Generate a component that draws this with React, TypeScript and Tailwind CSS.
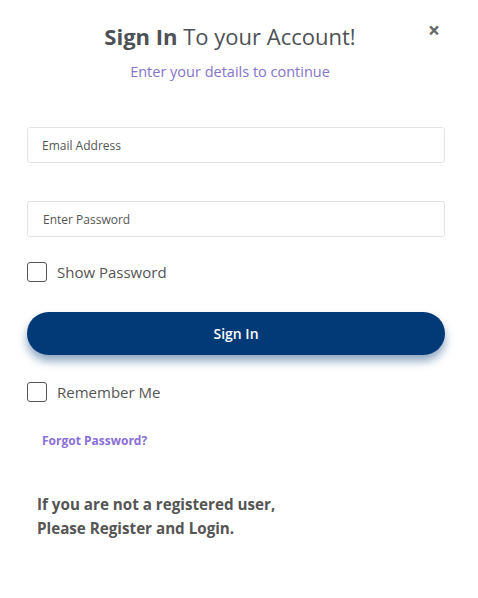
import { useState } from "react";

export default function App() {
  const [showPassword, setShowPassword] = useState(false);
  const [remember, setRemember] = useState(false);

  return (
    <div className="min-h-[598px] w-full bg-white font-['Open_Sans',sans-serif] text-[#555]">
      <div className="relative pl-[27px] pr-[33px] pt-[20px]">
        {/* Close */}
        <button className="absolute right-[38px] top-[20px] text-[21px] font-bold leading-none text-[#666]">
          ×
        </button>

        {/* Header */}
        <div className="mr-[12px] text-center">
          <h2 className="text-[22px] leading-[32px] text-[#4d5156]">
            <span className="font-bold">Sign In</span> To your Account!
          </h2>
          <p className="mt-[10px] text-[14.5px] leading-[20px] text-[#8574c9]">
            Enter your details to continue
          </p>
        </div>

        {/* Form */}
        <div className="mt-[45px] flex flex-col">
          <input
            type="email"
            placeholder="Email Address"
            className="h-[36px] w-full rounded-[3px] border border-[#e3e3e3] px-[14px] text-[12px] outline-none placeholder:text-[#555]"
          />
          <input
            type={showPassword ? "text" : "password"}
            placeholder="Enter Password"
            className="mt-[38px] h-[36px] w-full rounded-[3px] border border-[#e3e3e3] px-[15px] text-[12px] outline-none placeholder:text-[#555]"
          />

          <label className="mt-[24px] flex items-center gap-[10px]">
            <input
              type="checkbox"
              checked={showPassword}
              onChange={(e) => setShowPassword(e.target.checked)}
              className="h-[20px] w-[20px] appearance-none rounded-[3px] border border-[#555] bg-white"
            />
            <span className="text-[15px] text-[#555]">Show Password</span>
          </label>

          <button className="mt-[28px] h-[43px] w-full rounded-full bg-[#023a78] text-[14px] font-semibold text-white shadow-[0_6px_10px_rgba(2,58,120,0.45)]">
            Sign In
          </button>

          <label className="mt-[26px] flex items-center gap-[10px]">
            <input
              type="checkbox"
              checked={remember}
              onChange={(e) => setRemember(e.target.checked)}
              className="h-[20px] w-[20px] appearance-none rounded-[3px] border border-[#555] bg-white"
            />
            <span className="text-[15px] text-[#555]">Remember Me</span>
          </label>

          <a href="#" className="mt-[29px] ml-[15px] text-[12px] font-bold text-[#8a6fd4]">
            Forgot Password?
          </a>

          <p className="mt-[42px] ml-[10px] text-[15.2px] font-bold leading-[24px] text-[#555]">
            If you are not a registered user,
            <br />
            Please Register and Login.
          </p>
        </div>
      </div>
    </div>
  );
}
